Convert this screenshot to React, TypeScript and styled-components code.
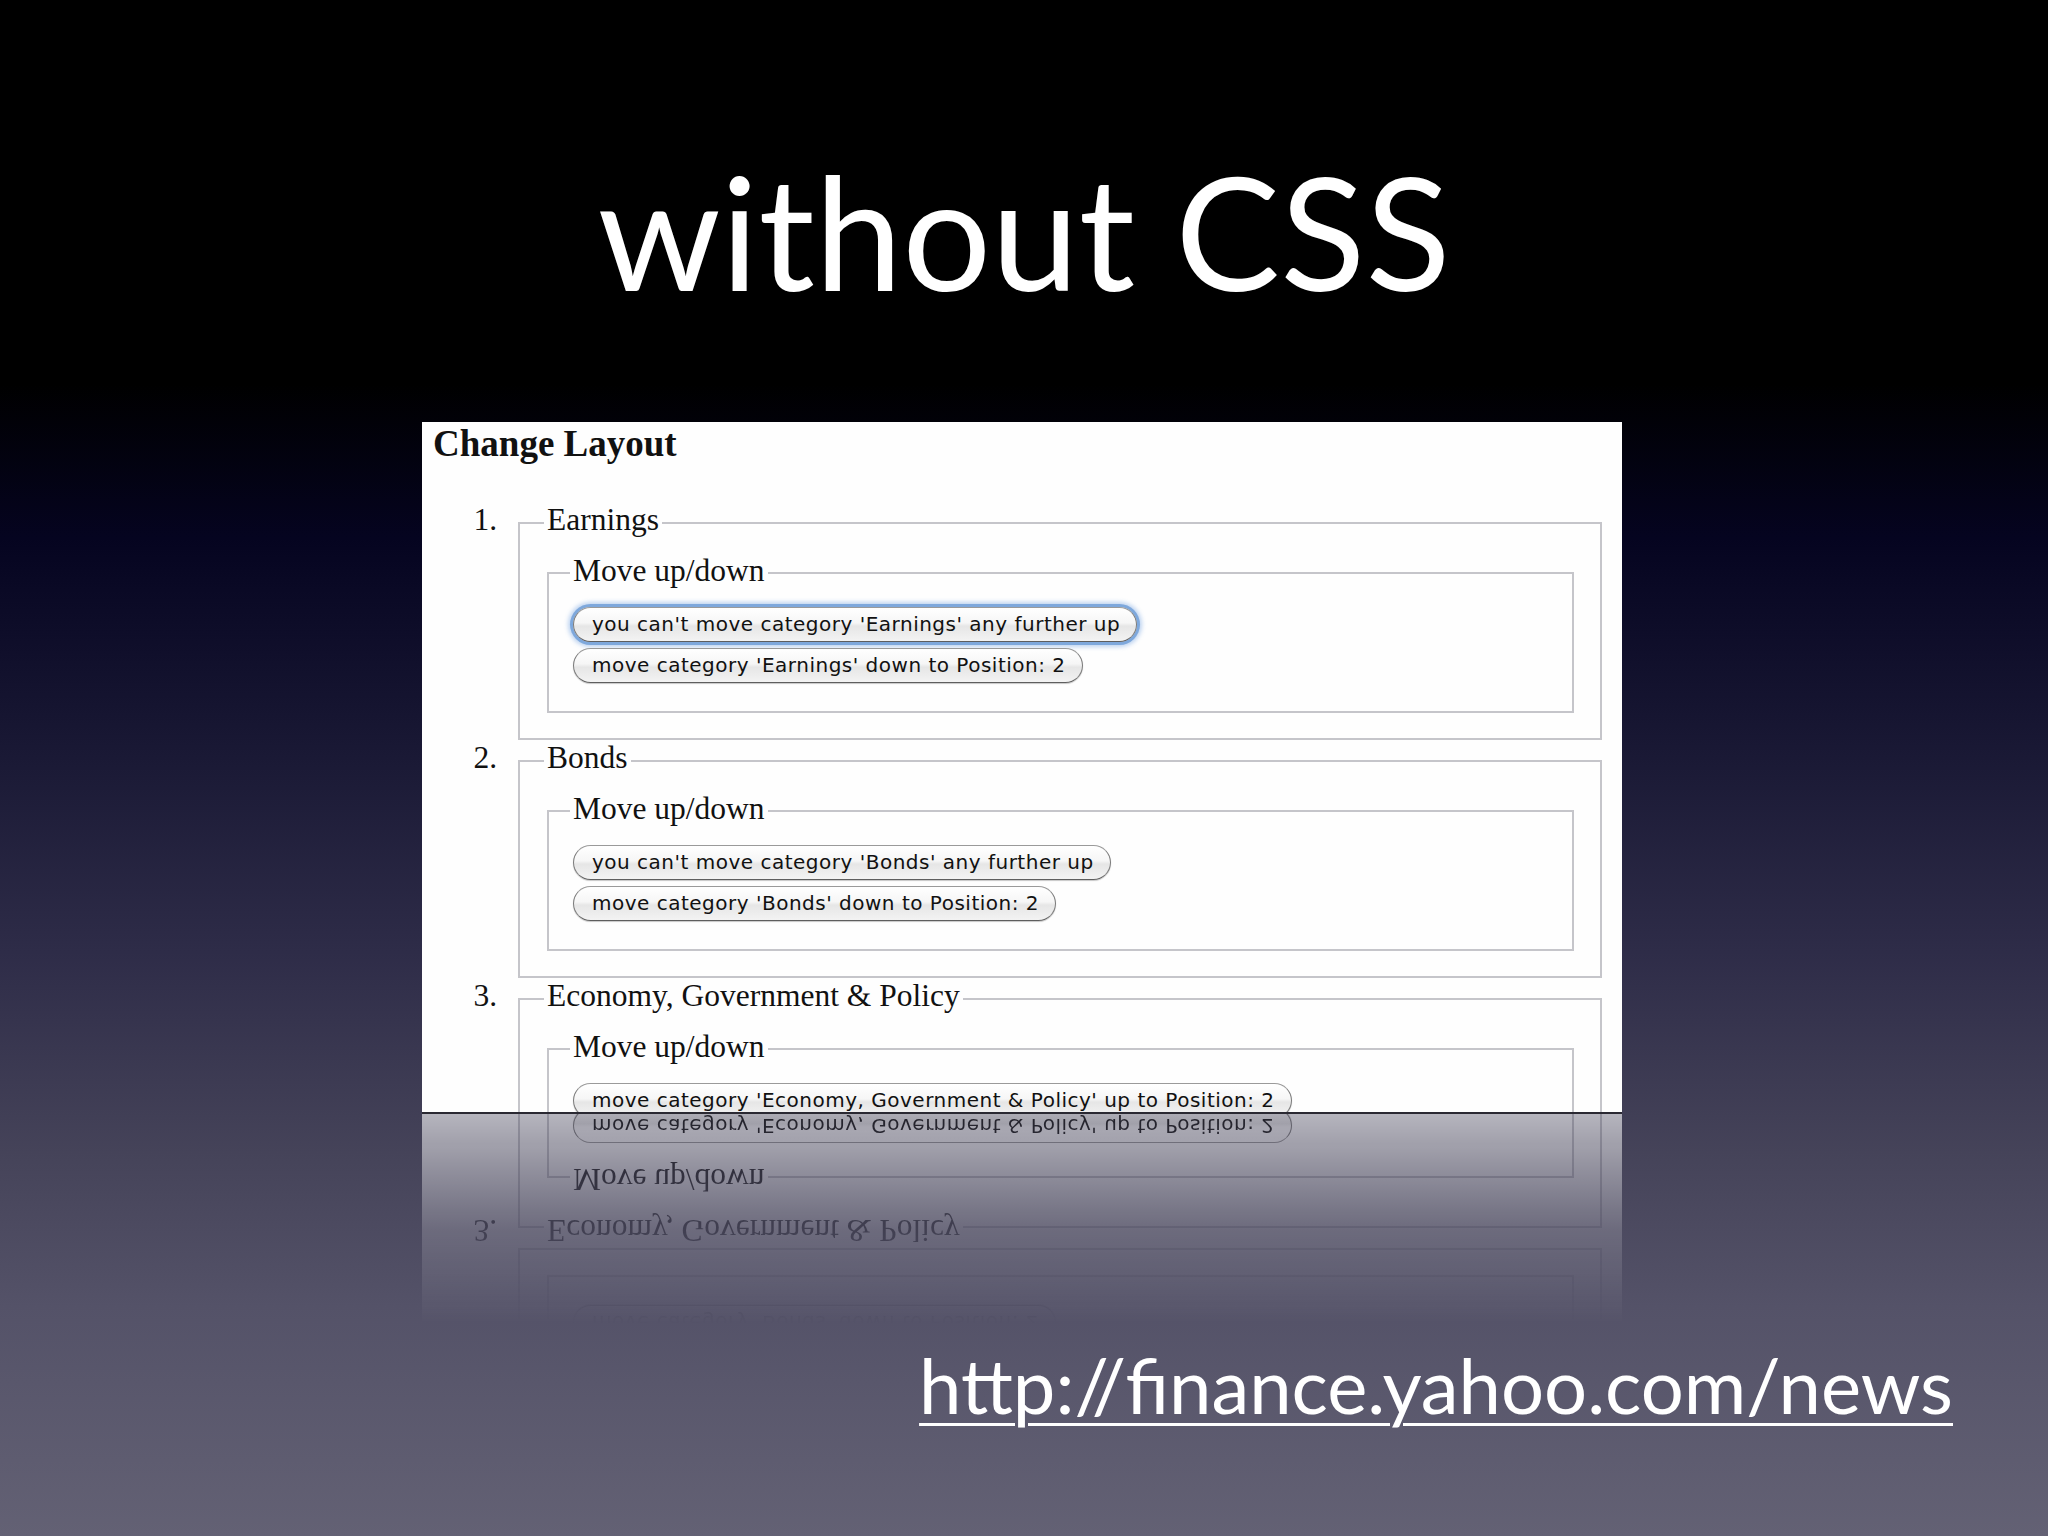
import React from "react";
import styled, { createGlobalStyle, css } from "styled-components";

const GlobalStyle = createGlobalStyle`
  html, body {
    margin: 0;
    padding: 0;
    background: #000;
  }
`;

type Section = {
  name: string;
  buttons: string[];
  focused?: number;
};

const sections: Section[] = [
  {
    name: "Earnings",
    buttons: [
      "you can't move category 'Earnings' any further up",
      "move category 'Earnings' down to Position: 2",
    ],
    focused: 0,
  },
  {
    name: "Bonds",
    buttons: [
      "you can't move category 'Bonds' any further up",
      "move category 'Bonds' down to Position: 2",
    ],
  },
  {
    name: "Economy, Government & Policy",
    buttons: ["move category 'Economy, Government & Policy' up to Position: 2"],
  },
];

const Slide = styled.main`
  width: 2048px;
  height: 1536px;
  overflow: hidden;
  display: flex;
  flex-direction: column;
  background: linear-gradient(
    to bottom,
    #000 0px,
    #000 384px,
    #050420 538px,
    #1b1a36 768px,
    #2e2c48 952px,
    #454359 1152px,
    #545268 1306px,
    #636174 1536px
  );
`;

const Title = styled.h1`
  align-self: center;
  margin: 152px 0 0;
  font-family: Lato, "Open Sans", sans-serif;
  font-weight: 400;
  font-size: 157px;
  line-height: 157px;
  color: #fff;
`;

const Shot = styled.section`
  align-self: flex-start;
  margin: 113px 0 0 422px;
  width: 1200px;
  display: flex;
  flex-direction: column;
`;

const Page = styled.div`
  width: 1200px;
  height: 690px;
  overflow: hidden;
  box-sizing: border-box;
  padding: 0 20px 0 11px;
  background: #fefefe;
  font-family: "Liberation Serif", "Times New Roman", serif;
  color: #111;
`;

const Seam = styled.div`
  height: 2px;
  background: #2a2932;
`;

const Reflection = styled.div`
  height: 210px;
  overflow: hidden;
  -webkit-mask-image: linear-gradient(to bottom, rgba(0, 0, 0, 0.62), rgba(0, 0, 0, 0.18) 55%, rgba(0, 0, 0, 0));
  mask-image: linear-gradient(to bottom, rgba(0, 0, 0, 0.62), rgba(0, 0, 0, 0.18) 55%, rgba(0, 0, 0, 0));
`;

const Flipped = styled.div`
  transform: scaleY(-1);
`;

const Heading = styled.h2`
  margin: 0;
  font-size: 37px;
  line-height: 44px;
  font-weight: 700;
`;

const List = styled.ol`
  list-style: none;
  margin: 36px 0 0;
  padding: 0;
`;

const Item = styled.li`
  display: grid;
  grid-template-columns: 64px 1fr;
  column-gap: 21px;
  align-items: start;
`;

const Num = styled.span`
  font-size: 31.5px;
  line-height: 36px;
  text-align: right;
`;

const Group = styled.fieldset<{ $inner?: boolean }>`
  margin: 0;
  min-width: 0;
  box-sizing: border-box;
  border: 2px solid #c5c5ca;
  padding: ${(p) => (p.$inner ? "13.5px 24px 28px" : "9.5px 26px 25px 27px")};
`;

const Legend = styled.legend`
  margin-left: -3px;
  padding: 0 3px 5px;
  font-size: 31.5px;
  line-height: 36px;
`;

const Buttons = styled.div`
  display: flex;
  flex-direction: column;
  align-items: flex-start;
  gap: 6px;
  min-height: 76px;
`;

const MoveButton = styled.button<{ $focused?: boolean }>`
  height: 35px;
  box-sizing: border-box;
  padding: 0 16px 0 18px;
  border: 1px solid #7a7a7a;
  border-top-color: #9a9a9a;
  border-bottom-color: #5e5e5e;
  border-radius: 18px;
  background: linear-gradient(to bottom, #ffffff 0%, #f6f6f6 45%, #e6e6e6 55%, #f3f3f3 100%);
  font-family: "DejaVu Sans", Verdana, sans-serif;
  font-size: 20px;
  letter-spacing: 0.5px;
  line-height: 33px;
  color: #111;
  white-space: nowrap;
  box-shadow: 0 1px 1px rgba(0, 0, 0, 0.22);
  ${(p) =>
    p.$focused &&
    css`
      box-shadow: 0 0 0 3px #7ea8dc, 0 0 4px 5px rgba(110, 160, 225, 0.45);
    `}
`;

const UrlLink = styled.a`
  align-self: flex-end;
  margin: 21px 95px 0 0;
  font-family: Lato, "Open Sans", sans-serif;
  font-size: 76px;
  line-height: 80px;
  color: #fff;
  text-decoration: underline;
  text-decoration-thickness: 3px;
  text-underline-offset: 9px;
`;

function LayoutForm() {
  return (
    <Page>
      <Heading>Change Layout</Heading>
      <List>
        {sections.map((s, i) => (
          <Item key={s.name}>
            <Num>{i + 1}.</Num>
            <Group>
              <Legend>{s.name}</Legend>
              <Group $inner>
                <Legend>Move up/down</Legend>
                <Buttons>
                  {s.buttons.map((b, j) => (
                    <MoveButton key={b} type="button" $focused={s.focused === j}>
                      {b}
                    </MoveButton>
                  ))}
                </Buttons>
              </Group>
            </Group>
          </Item>
        ))}
      </List>
    </Page>
  );
}

export default function App() {
  return (
    <>
      <GlobalStyle />
      <Slide>
        <Title>without CSS</Title>
        <Shot>
          <LayoutForm />
          <Seam />
          <Reflection aria-hidden="true">
            <Flipped>
              <LayoutForm />
            </Flipped>
          </Reflection>
        </Shot>
        <UrlLink href="http://finance.yahoo.com/news">http://finance.yahoo.com/news</UrlLink>
      </Slide>
    </>
  );
}
